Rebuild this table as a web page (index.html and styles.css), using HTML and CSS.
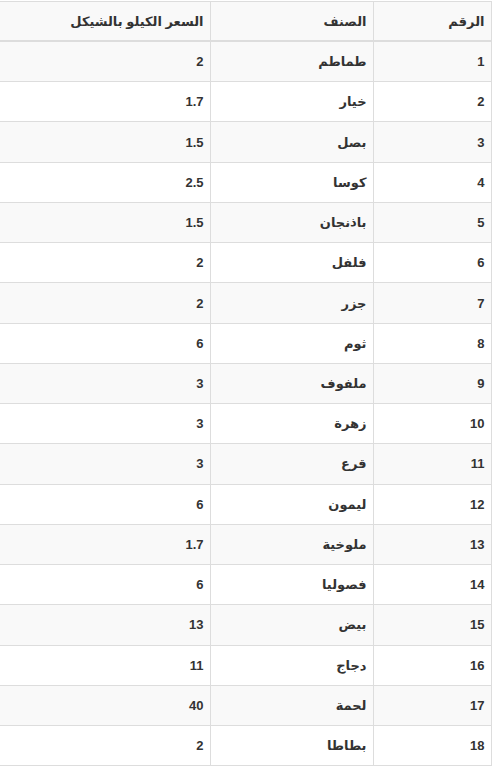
FILE: index.html
```html
<!DOCTYPE html>
<html lang="ar" dir="rtl">
<head>
<meta charset="utf-8">
<title>أسعار الخضار</title>
<link rel="stylesheet" href="styles.css">
</head>
<body>
<table class="prices">
  <colgroup>
    <col class="col-num">
    <col class="col-name">
    <col class="col-price">
  </colgroup>
  <thead>
    <tr><th>الرقم</th><th>الصنف</th><th>السعر الكيلو بالشيكل</th></tr>
  </thead>
  <tbody>
    <tr><td>1</td><td>طماطم</td><td>2</td></tr>
    <tr><td>2</td><td>خيار</td><td>1.7</td></tr>
    <tr><td>3</td><td>بصل</td><td>1.5</td></tr>
    <tr><td>4</td><td>كوسا</td><td>2.5</td></tr>
    <tr><td>5</td><td>باذنجان</td><td>1.5</td></tr>
    <tr><td>6</td><td>فلفل</td><td>2</td></tr>
    <tr><td>7</td><td>جزر</td><td>2</td></tr>
    <tr><td>8</td><td>ثوم</td><td>6</td></tr>
    <tr><td>9</td><td>ملفوف</td><td>3</td></tr>
    <tr><td>10</td><td>زهرة</td><td>3</td></tr>
    <tr><td>11</td><td>قرع</td><td>3</td></tr>
    <tr><td>12</td><td>ليمون</td><td>6</td></tr>
    <tr><td>13</td><td>ملوخية</td><td>1.7</td></tr>
    <tr><td>14</td><td>فصوليا</td><td>6</td></tr>
    <tr><td>15</td><td>بيض</td><td>13</td></tr>
    <tr><td>16</td><td>دجاج</td><td>11</td></tr>
    <tr><td>17</td><td>لحمة</td><td>40</td></tr>
    <tr><td>18</td><td>بطاطا</td><td>2</td></tr>
  </tbody>
</table>
</body>
</html>
```
FILE: styles.css
```css
html, body {
  margin: 0;
  padding: 0;
  background: #ffffff;
}
body {
  padding-top: 1px;
  font-family: "Liberation Sans", "DejaVu Sans", sans-serif;
  font-size: 13px;
  font-weight: bold;
  color: #333333;
}
.prices {
  direction: rtl;
  width: 491px;
  margin-left: 0;
  margin-right: auto;
  border-collapse: collapse;
  table-layout: fixed;
}
.col-num { width: 118px; }
.col-name { width: 163px; }
.col-price { width: 210px; }
.prices th,
.prices td {
  text-align: right;
  padding: 0 6px 0 8px;
  border: 1px solid #dddddd;
  vertical-align: middle;
}
.prices th:last-child,
.prices td:last-child {
  border-left: none;
}
.prices th {
  height: 38px;
  background: #f9f9f9;
  border-bottom: 2px solid #dddddd;
}
.prices td {
  height: 39.24px;
}
.prices tbody tr:nth-child(odd) td {
  background: #f9f9f9;
}
```
